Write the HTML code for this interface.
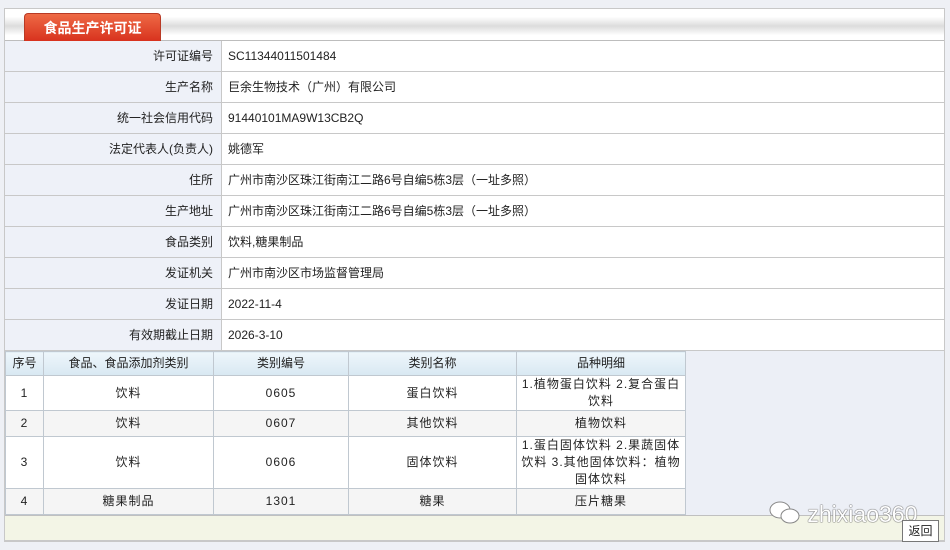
<!DOCTYPE html>
<html><head><meta charset="utf-8"><style>
*{margin:0;padding:0;box-sizing:border-box}
body{width:950px;height:550px;background:#eef0f5;font-family:"Liberation Sans","Noto Sans CJK SC",sans-serif;font-size:12px;color:#222;position:relative;overflow:hidden}
.box{position:absolute;left:4px;top:8px;width:941px;height:534px;border:1px solid #c8c8c8;background:#fff}
.strip{position:absolute;left:0;top:0;width:939px;height:32px;background:linear-gradient(#fff 0%,#fff 25%,#dcdcdc 55%,#fff 85%,#fff 100%);border-bottom:1px solid #bdbdbd}
.tab{position:absolute;left:19px;top:4px;width:137px;height:28px;background:linear-gradient(#ee6a45,#d8321e);border:1px solid #b83a25;border-bottom:none;border-radius:4px 4px 0 0;color:#fff;font-weight:bold;font-size:14px;text-align:center;line-height:28px}
.r{position:absolute;left:0;width:939px;height:31px;border-bottom:1px solid #c8c8c8}
.l{position:absolute;left:0;top:0;width:217px;height:30px;background:#eef1f8;border-right:1px solid #c8c8c8;text-align:right;padding-right:8px;line-height:30px}
.v{position:absolute;left:223px;top:0;line-height:30px}
.t{position:absolute;left:0;top:342px;border-collapse:collapse}
.t td{border:1px solid #c0c8d0;text-align:center;font-size:12px;line-height:17px;letter-spacing:1px;padding:0 3px}
.t tr.h td{background:linear-gradient(#eef6fb,#d8e8f2);height:24px;font-weight:normal;letter-spacing:0}
.gray{position:absolute;left:680px;top:342px;width:259px;height:164px;background:#eceff6}
.foot{position:absolute;left:0;top:506px;width:939px;height:26px;background:#f3f5e6;border-top:1px solid #c0c0c0;border-bottom:1px solid #c8c8c8}
.btn{position:absolute;left:897px;top:511px;width:37px;height:22px;background:#fff;border:1px solid #777;font-size:12px;text-align:center;line-height:20px}
.wm{position:absolute;left:764px;top:492px;font-size:23px;color:#fff;text-shadow:0 0 1px #666,0 0 1px #666,0 0 1px #666;font-family:"Liberation Sans",sans-serif}
</style></head><body>
<div class="box">
<div class="strip"></div>
<div class="tab">食品生产许可证</div>
<div class="r" style="top:32px"><div class="l">许可证编号</div><div class="v">SC11344011501484</div></div>
<div class="r" style="top:63px"><div class="l">生产名称</div><div class="v">巨余生物技术（广州）有限公司</div></div>
<div class="r" style="top:94px"><div class="l">统一社会信用代码</div><div class="v">91440101MA9W13CB2Q</div></div>
<div class="r" style="top:125px"><div class="l">法定代表人(负责人)</div><div class="v">姚德军</div></div>
<div class="r" style="top:156px"><div class="l">住所</div><div class="v">广州市南沙区珠江街南江二路6号自编5栋3层（一址多照）</div></div>
<div class="r" style="top:187px"><div class="l">生产地址</div><div class="v">广州市南沙区珠江街南江二路6号自编5栋3层（一址多照）</div></div>
<div class="r" style="top:218px"><div class="l">食品类别</div><div class="v">饮料,糖果制品</div></div>
<div class="r" style="top:249px"><div class="l">发证机关</div><div class="v">广州市南沙区市场监督管理局</div></div>
<div class="r" style="top:280px"><div class="l">发证日期</div><div class="v">2022-11-4</div></div>
<div class="r" style="top:311px"><div class="l">有效期截止日期</div><div class="v">2026-3-10</div></div>
<div class="gray"></div>
<table class="t">
<tr class="h"><td style="width:38px">序号</td><td style="width:170px">食品、食品添加剂类别</td><td style="width:135px">类别编号</td><td style="width:168px">类别名称</td><td style="width:169px">品种明细</td></tr>
<tr style="height:35px"><td>1</td><td>饮料</td><td>0605</td><td>蛋白饮料</td><td>1.植物蛋白饮料 2.复合蛋白饮料</td></tr>
<tr style="height:26px;background:#f5f5f5"><td>2</td><td>饮料</td><td>0607</td><td>其他饮料</td><td>植物饮料</td></tr>
<tr style="height:52px"><td>3</td><td>饮料</td><td>0606</td><td>固体饮料</td><td>1.蛋白固体饮料 2.果蔬固体饮料 3.其他固体饮料：植物固体饮料</td></tr>
<tr style="height:26px;background:#f5f5f5"><td>4</td><td>糖果制品</td><td>1301</td><td>糖果</td><td>压片糖果</td></tr>
</table>
<div class="foot"></div>
<div class="wm"><svg width="32" height="24" viewBox="0 0 32 24" style="vertical-align:-3px"><ellipse cx="11" cy="9" rx="10" ry="8" fill="#fff" stroke="#888"/><ellipse cx="21" cy="15" rx="9" ry="7" fill="#fff" stroke="#888"/></svg> zhixiao360</div>
<div class="btn">返回</div>
</div>
</body></html>
